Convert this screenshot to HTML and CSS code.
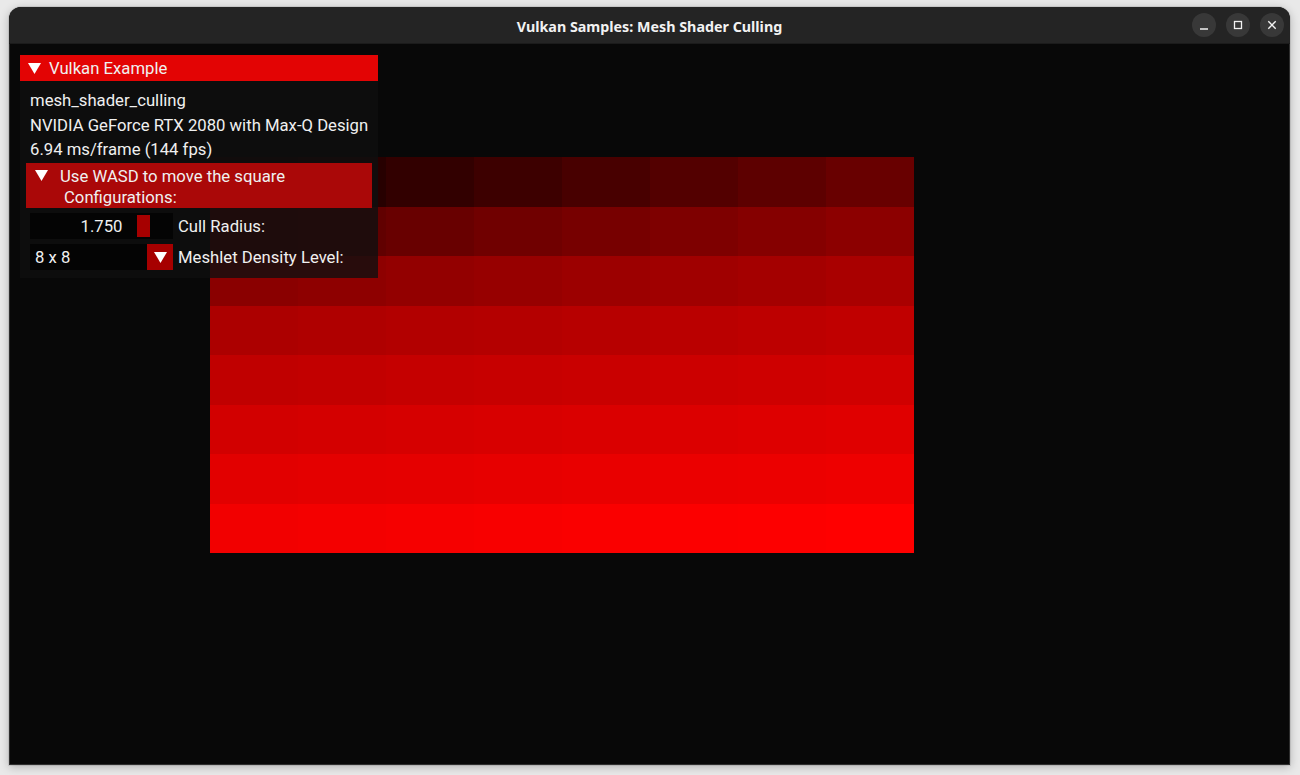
FILE: index.html
```html
<!DOCTYPE html>
<html>
<head>
<meta charset="utf-8">
<link rel="stylesheet" href="styles.css">
</head>
<body>
<div class="window">
  <div class="titlebar">
    <div class="title-spacer"></div>
    <div class="title">Vulkan Samples: Mesh Shader Culling</div>
    <div class="controls">
      <div class="ctl"><svg width="24" height="24" viewBox="0 0 24 24"><line x1="8" y1="16" x2="16" y2="16" stroke="#f2f2f2" stroke-width="1.4"/></svg></div>
      <div class="ctl"><svg width="24" height="24" viewBox="0 0 24 24"><rect x="8.5" y="8.5" width="7" height="7" fill="none" stroke="#f2f2f2" stroke-width="1.3"/></svg></div>
      <div class="ctl"><svg width="24" height="24" viewBox="0 0 24 24"><path d="M8.3 8.3 L15.7 15.7 M15.7 8.3 L8.3 15.7" stroke="#f2f2f2" stroke-width="1.4"/></svg></div>
    </div>
  </div>
  <div class="scene">
    <div class="grid">
      <div class="row r1"><i></i><i></i><i></i><i></i><i></i><i></i><i></i><i></i></div>
      <div class="row r2"><i></i><i></i><i></i><i></i><i></i><i></i><i></i><i></i></div>
      <div class="row r3"><i></i><i></i><i></i><i></i><i></i><i></i><i></i><i></i></div>
      <div class="row r4"><i></i><i></i><i></i><i></i><i></i><i></i><i></i><i></i></div>
      <div class="row r5"><i></i><i></i><i></i><i></i><i></i><i></i><i></i><i></i></div>
      <div class="row r6"><i></i><i></i><i></i><i></i><i></i><i></i><i></i><i></i></div>
      <div class="row r7"><i></i><i></i><i></i><i></i><i></i><i></i><i></i><i></i></div>
      <div class="row r8"><i></i><i></i><i></i><i></i><i></i><i></i><i></i><i></i></div>
    </div>

    <div class="panel">
      <div class="panel-head">
        <svg class="tri" width="13" height="12" viewBox="0 0 13 12"><polygon points="0,1 13,1 6.5,12" fill="#fff"/></svg>
        <span>Vulkan Example</span>
      </div>
      <div class="panel-body">
        <div class="line">mesh_shader_culling</div>
        <div class="line">NVIDIA GeForce RTX 2080 with Max-Q Design</div>
        <div class="line">6.94 ms/frame (144 fps)</div>
        <div class="sub-head">
          <svg class="tri2" width="13" height="11" viewBox="0 0 13 11"><polygon points="0,0 13,0 6.5,11" fill="#fff"/></svg>
          <div class="sub-text">
            <div>Use WASD to move the square</div>
            <div class="indent">Configurations:</div>
          </div>
        </div>
        <div class="field-row">
          <div class="slider"><span>1.750</span><div class="grab" style="left:107px"></div></div>
          <div class="label">Cull Radius:</div>
        </div>
        <div class="field-row">
          <div class="combo"><span>8 x 8</span><div class="combo-btn"><svg width="13" height="11" viewBox="0 0 13 11"><polygon points="0,0 13,0 6.5,11" fill="#fff"/></svg></div></div>
          <div class="label">Meshlet Density Level:</div>
        </div>
      </div>
    </div>
  </div>
</div>
</body>
</html>
```

FILE: styles.css
```css
html, body {
  margin: 0;
  padding: 0;
  background: #e9e9e9;
  width: 1300px;
  height: 775px;
  overflow: hidden;
}

.window {
  margin: 7px 0 0 9px;
  width: 1281px;
  height: 758px;
  border-radius: 12px 12px 0 0;
  overflow: hidden;
  background: #080808;
  box-shadow: 0 2px 10px rgba(0,0,0,0.25), 0 0 0 1px rgba(0,0,0,0.08);
  display: flex;
  flex-direction: column;
}

.titlebar {
  height: 37px;
  flex: none;
  background: #242424;
  display: grid;
  grid-template-columns: 1fr auto 1fr;
  align-items: center;
  border-bottom: 1px solid #1b1b1b;
  box-sizing: border-box;
}

.title {
  font-family: "Noto Sans", "DejaVu Sans", sans-serif;
  font-weight: 700;
  font-size: 14.3px;
  color: #f2f2f2;
  padding-top: 2px;
}

.controls {
  justify-self: end;
  display: flex;
  gap: 10px;
  padding-right: 6px;
}

.ctl {
  width: 24px;
  height: 24px;
  border-radius: 50%;
  background: #383838;
}

.ctl svg { display: block; }

.scene {
  position: relative;
  flex: 1;
  border: 1px solid #2e2e2e;
  border-top: none;
  background: #080808;
  padding: 113px 0 0 200px;
}

.grid {
  width: 704px;
  display: flex;
  flex-direction: column;
}

.row {
  display: grid;
  grid-template-columns: repeat(8, 88px);
  height: 49.5px;
}

.row i {
  display: block;
  background: rgb(calc(var(--b) + var(--s) * var(--i)), 0, 0);
}

.row i:nth-child(1) { --i: 0; }
.row i:nth-child(2) { --i: 1; }
.row i:nth-child(3) { --i: 2; }
.row i:nth-child(4) { --i: 3; }
.row i:nth-child(5) { --i: 4; }
.row i:nth-child(6) { --i: 5; }
.row i:nth-child(7) { --i: 6; }
.row i:nth-child(8) { --i: 7; }

.r1 { --b: 28; --s: 10.9; }
.r2 { --b: 90; --s: 7.2; }
.r3 { --b: 138; --s: 4.4; }
.r4 { --b: 172; --s: 2.8; }
.r5 { --b: 192; --s: 2.3; }
.r6 { --b: 210; --s: 2; }
.r7 { --b: 226; --s: 1.7; }
.r8 { --b: 242; --s: 1.9; }

.panel {
  position: absolute;
  left: 10px;
  top: 11px;
  width: 358px;
  font-family: Roboto, "Liberation Sans", sans-serif;
  font-size: 16.7px;
  color: #f0f0f0;
}

.panel-head {
  height: 26px;
  background: #e30404;
  display: flex;
  align-items: center;
  padding-left: 8px;
  gap: 8px;
}

.panel-head .tri { display: block; margin-top: -1px; }

.panel-body {
  background: rgba(15, 15, 15, 0.8);
  padding: 7px 6px 8px 6px;
}

.line {
  height: 24.5px;
  line-height: 25.5px;
  padding-left: 4px;
  white-space: nowrap;
}

.sub-head {
  margin-top: 1.5px;
  height: 45px;
  background: #aa0808;
  display: flex;
  align-items: flex-start;
  padding: 3px 0 0 9px;
  box-sizing: border-box;
  gap: 12px;
}

.tri2 { display: block; margin-top: 4px; flex: none; }

.sub-text { line-height: 21px; }
.sub-text .indent { padding-left: 4px; }

.field-row {
  display: flex;
  align-items: center;
  gap: 5px;
  margin-top: 5px;
  padding-left: 4px;
}

.slider, .combo {
  position: relative;
  width: 143px;
  height: 26px;
  background: #040404;
  box-sizing: border-box;
}

.slider span {
  display: block;
  text-align: center;
  line-height: 27px;
}

.grab {
  position: absolute;
  top: 2px;
  width: 13px;
  height: 22px;
  background: #a60000;
}

.combo {
  display: flex;
  align-items: center;
  justify-content: space-between;
  padding-left: 5px;
}

.combo span { padding-top: 1px; }

.combo-btn {
  width: 26px;
  height: 26px;
  background: #a60000;
  display: flex;
  align-items: center;
  justify-content: center;
}

.combo-btn svg { display: block; }

.label { white-space: nowrap; padding-top: 1px; }
```
